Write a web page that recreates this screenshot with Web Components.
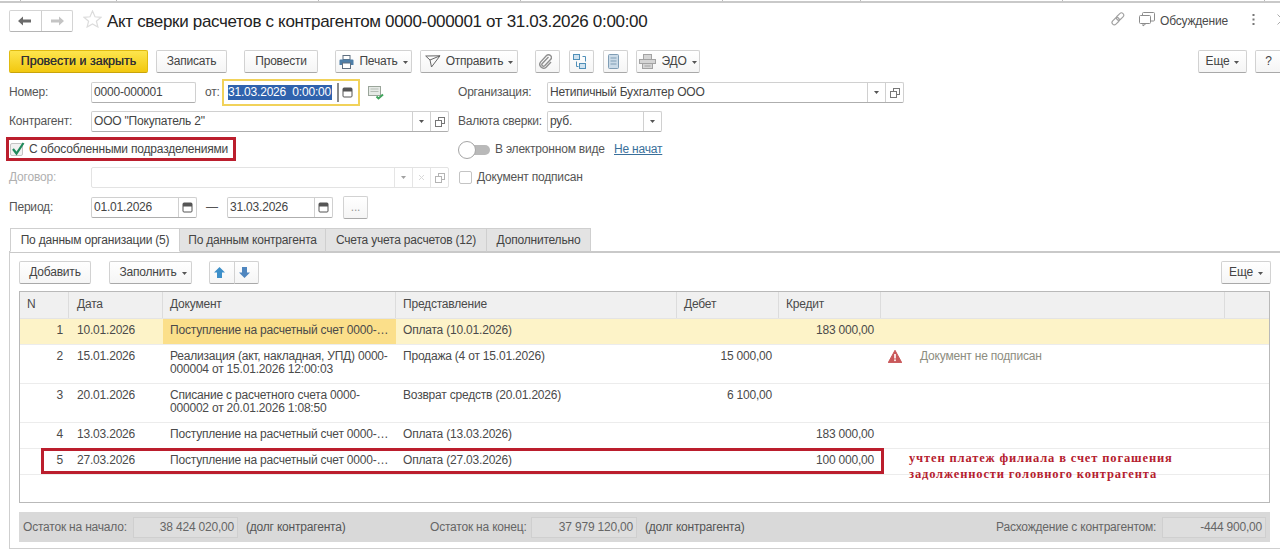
<!DOCTYPE html>
<html lang="ru">
<head>
<meta charset="utf-8">
<title>Акт сверки</title>
<style>
	html, body { margin: 0; height: 555px; overflow: hidden; background: #fff; }
	body { font: 12px/15px "Liberation Sans", Arial, sans-serif; letter-spacing: -.2px; color: #4a4a4a; }
</style>
</head>
<body>
<top-strip></top-strip>
<title-bar>Акт сверки расчетов с контрагентом 0000-000001 от 31.03.2026 0:00:00</title-bar>
<tool-bar>
	<ui-btn kind="primary" style="width:139px">Провести и закрыть</ui-btn>
	<ui-btn style="width:71px;margin-left:8px">Записать</ui-btn>
	<ui-btn style="width:74px;margin-left:17px">Провести</ui-btn>
	<ui-btn menu style="width:77px;margin-left:17px"><ui-icon name="printer" slot="icon"></ui-icon>Печать</ui-btn>
	<ui-btn menu style="width:98px;margin-left:8px"><ui-icon name="send" slot="icon"></ui-icon>Отправить</ui-btn>
	<ui-btn style="width:25px;margin-left:17px"><ui-icon name="clip" slot="icon"></ui-icon></ui-btn>
	<ui-btn style="width:25px;margin-left:9px"><ui-icon name="struct" slot="icon"></ui-icon></ui-btn>
	<ui-btn style="width:25px;margin-left:9px"><ui-icon name="list" slot="icon"></ui-icon></ui-btn>
	<ui-btn menu style="width:64px;margin-left:8px"><ui-icon name="edo" slot="icon"></ui-icon>ЭДО</ui-btn>
	<ui-btn menu style="width:49px;margin-left:auto">Еще</ui-btn>
	<ui-btn style="width:27px;margin:0 -11px 0 8px">?</ui-btn>
</tool-bar>
<doc-form>
	<form-row>
		<form-label style="width:82px">Номер:</form-label>
		<ui-field value="0000-000001" style="width:105px"></ui-field>
		<form-label style="width:17px;margin-left:9px">от:</form-label>
		<focus-date>31.03.2026&nbsp; 0:00:00</focus-date>
		<ui-icon name="docok" style="margin-left:8px"></ui-icon>
	</form-row>
	<form-row>
		<form-label style="width:89px">Организация:</form-label>
		<ui-field value="Нетипичный Бухгалтер ООО" buttons="caret,open" style="width:357px"></ui-field>
	</form-row>
	<form-row>
		<form-label style="width:82px">Контрагент:</form-label>
		<ui-field value="ООО &quot;Покупатель 2&quot;" buttons="caret,open" style="width:358px"></ui-field>
	</form-row>
	<form-row>
		<form-label style="width:89px">Валюта сверки:</form-label>
		<ui-field value="руб." buttons="caret" style="width:115px"></ui-field>
	</form-row>
	<form-row>
		<ui-check checked marked>С обособленными подразделениями</ui-check>
	</form-row>
	<form-row>
		<ui-toggle></ui-toggle>
		<form-label style="margin-left:5px;width:119px">В электронном виде</form-label>
		<ui-link>Не начат</ui-link>
	</form-row>
	<form-row>
		<form-label muted style="width:82px">Договор:</form-label>
		<ui-field disabled buttons="caret,clear,open" style="width:358px"></ui-field>
	</form-row>
	<form-row>
		<ui-check style="margin-left:1px">Документ подписан</ui-check>
	</form-row>
	<form-row>
		<form-label style="width:82px">Период:</form-label>
		<ui-field value="01.01.2026" buttons="cal" style="width:106px"></ui-field>
		<form-label style="width:30px;text-align:center">—</form-label>
		<ui-field value="31.03.2026" buttons="cal" style="width:106px"></ui-field>
		<ui-btn style="width:25px;margin-left:10px;color:#999">...</ui-btn>
	</form-row>
</doc-form>
<tab-bar>
	<tab-item active style="width:170px">По данным организации (5)</tab-item>
	<tab-item style="width:146px">По данным контрагента</tab-item>
	<tab-item style="width:161px">Счета учета расчетов (12)</tab-item>
	<tab-item style="width:104px">Дополнительно</tab-item>
</tab-bar>
<tab-panel>
	<tool-bar>
		<ui-btn style="width:72px">Добавить</ui-btn>
		<ui-btn menu style="width:83px;margin-left:18px;padding-left:5px">Заполнить</ui-btn>
		<ui-btn style="width:26px;margin-left:17px;border-radius:2px 0 0 2px"><ui-icon name="up" slot="icon"></ui-icon></ui-btn>
		<ui-btn style="width:25px;margin-left:-1px;border-radius:0 2px 2px 0"><ui-icon name="down" slot="icon"></ui-icon></ui-btn>
		<ui-btn menu style="width:50px;margin-left:auto;margin-right:-1px">Еще</ui-btn>
	</tool-bar>
	<recon-table>
		<recon-row head n="N" date="Дата" doc="Документ" view="Представление" debit="Дебет" credit="Кредит"></recon-row>
		<recon-row selected n="1" date="10.01.2026" doc="Поступление на расчетный счет 0000-…" view="Оплата (10.01.2026)" credit="183 000,00"></recon-row>
		<recon-row tall warn="Документ не подписан" n="2" date="15.01.2026" doc="Реализация (акт, накладная, УПД) 0000-000004 от 15.01.2026 12:00:03" view="Продажа (4 от 15.01.2026)" debit="15 000,00"></recon-row>
		<recon-row tall n="3" date="20.01.2026" doc="Списание с расчетного счета 0000-000002 от 20.01.2026 1:08:50" view="Возврат средств (20.01.2026)" debit="6 100,00"></recon-row>
		<recon-row n="4" date="13.03.2026" doc="Поступление на расчетный счет 0000-…" view="Оплата (13.03.2026)" credit="183 000,00"></recon-row>
		<recon-row marked n="5" date="27.03.2026" doc="Поступление на расчетный счет 0000-…" view="Оплата (27.03.2026)" credit="100 000,00">учтен платеж филиала в счет погашения<br>задолженности головного контрагента</recon-row>
	</recon-table>
	<totals-bar>
		<total-item label="Остаток на начало:" value="38 424 020,00" note="(долг контрагента)" style="width:407px;--lw:110px;--vw:105px"></total-item>
		<total-item label="Остаток на конец:" value="37 979 120,00" note="(долг контрагента)" style="width:566px;--lw:101px;--vw:106px"></total-item>
		<total-item label="Расхождение с контрагентом:" value="-444 900,00" style="--lw:166px;--vw:104px"></total-item>
	</totals-bar>
</tab-panel>
<script>
const ICONS = {
	back: `<svg width="14" height="10" viewBox="0 0 14 10"><path d="M0 5 5 0.5V3.5H13V6.5H5V9.5Z" fill="#6b6b6b"/></svg>`,
	forward: `<svg width="14" height="10" viewBox="0 0 14 10"><path d="M14 5 9 0.5V3.5H1V6.5H9V9.5Z" fill="#c4c4c4"/></svg>`,
	star: `<svg width="19" height="18" viewBox="0 0 19 18"><path d="M9.5 1 12 6.8 18 7.3 13.4 11.2 14.9 17 9.5 13.9 4.1 17 5.6 11.2 1 7.3 7 6.8Z" fill="none" stroke="#dcdcdc" stroke-width="1.2"/></svg>`,
	link: `<svg width="15" height="15" viewBox="0 0 15 15" fill="none" stroke="#a0a0a0" stroke-width="1.1"><rect x="-1.5" y="4.8" width="8.4" height="4.6" rx="2.3" transform="rotate(-45 2.7 7.1) translate(0.6 3.6)"/><rect x="6" y="1.8" width="8.4" height="4.6" rx="2.3" transform="rotate(-45 10.2 4.1) translate(-0.4 0.2)"/></svg>`,
	chat: `<svg width="17" height="15" viewBox="0 0 17 15" fill="none" stroke="#8c8c8c"><rect x="0.5" y="3.5" width="11" height="8" rx="1" fill="#fff"/><path d="M3.5 3V1.5a1 1 0 0 1 1-1h10a1 1 0 0 1 1 1V8a1 1 0 0 1-1 1H12"/><path d="M4 11.5V14L7 11.5"/></svg>`,
	dots: `<svg width="3" height="11" viewBox="0 0 3 11" fill="#777"><rect x="0.5" y="0" width="2" height="2"/><rect x="0.5" y="4.5" width="2" height="2"/><rect x="0.5" y="9" width="2" height="2"/></svg>`,
	chev: `<svg width="6" height="11" viewBox="0 0 6 11"><path d="M0.5 0.5 5.5 5.5 0.5 10.5" fill="none" stroke="#aaa"/></svg>`,
	printer: `<svg width="15" height="14" viewBox="0 0 15 14"><rect x="4" y="0.5" width="7" height="4" fill="#fff" stroke="#5f6f80"/><path d="M1.5 4.5h12a1 1 0 0 1 1 1V10h-14V5.5a1 1 0 0 1 1-1Z" fill="#4d7ea8"/><rect x="3.5" y="8" width="8" height="5.5" fill="#fff" stroke="#5f6f80"/></svg>`,
	send: `<svg width="16" height="13" viewBox="0 0 16 13" fill="none" stroke="#666"><path d="M0.7 1 15 0.8 6.5 12 5 5Z"/><path d="M5 5 15 0.8"/></svg>`,
	clip: `<svg width="13" height="15" viewBox="0 0 13 15" fill="none" stroke="#8f8f8f" stroke-width="1.4"><path d="M9.5 3 3.3 9.4a1.7 1.7 0 0 0 2.4 2.4L11.5 5.6a2.8 2.8 0 0 0-4-4L1.7 7.9a3.8 3.8 0 0 0 5.4 5.3L12 8"/></svg>`,
	struct: `<svg width="15" height="15" viewBox="0 0 15 15" fill="none" stroke="#4f8fb8"><rect x="1.5" y="0.5" width="6" height="5" fill="#cfe2ef"/><rect x="7.5" y="9.5" width="6" height="5" fill="#cfe2ef"/><path d="M10.5 2.5h3v5M4.5 7.5v5h2"/></svg>`,
	list: `<svg width="11" height="15" viewBox="0 0 11 15" fill="#cbdbe8" stroke="#7f9db5"><rect x="0.5" y="0.5" width="10" height="14" rx="1"/><path d="M2.5 4h6M2.5 7h6M2.5 10h6" fill="none"/></svg>`,
	edo: `<svg width="17" height="15" viewBox="0 0 17 15" fill="#d5d5d5" stroke="#a3a3a3"><rect x="4.5" y="0.5" width="8" height="5"/><rect x="0.5" y="5.5" width="16" height="4"/><rect x="3.5" y="9.5" width="10" height="5"/><path d="M5.5 12h6" fill="none"/></svg>`,
	caret: `<svg width="5" height="3" viewBox="0 0 5 3"><path d="M0 0H5L2.5 3Z" fill="#555"/></svg>`,
	open: `<svg width="10" height="10" viewBox="0 0 10 10" fill="#fff" stroke="#777"><rect x="3.5" y="0.5" width="6" height="6"/><rect x="0.5" y="3.5" width="6" height="6"/></svg>`,
	clear: `<svg width="7" height="7" viewBox="0 0 7 7" stroke="#bbb"><path d="M1 1 6 6M6 1 1 6"/></svg>`,
	cal: `<svg width="11" height="11" viewBox="0 0 11 11"><rect x="1" y="1" width="9" height="9" rx="1" fill="#fff" stroke="#555"/><rect x="1" y="1" width="9" height="3.5" fill="#555"/></svg>`,
	up: `<svg width="11" height="11" viewBox="0 0 11 11"><path d="M5.5 0 11 5.5H8V11H3V5.5H0Z" fill="#3d8fc9"/></svg>`,
	down: `<svg width="11" height="11" viewBox="0 0 11 11"><path d="M5.5 11 11 5.5H8V0H3V5.5H0Z" fill="#4f86bf"/></svg>`,
	warn: `<svg width="14" height="13" viewBox="0 0 14 13"><path d="M7 0.3 13.8 12.7H0.2Z" fill="#c9585a" stroke="#c9585a" stroke-linejoin="round"/><rect x="6.2" y="4" width="1.6" height="4.5" fill="#fff"/><rect x="6.2" y="9.4" width="1.6" height="1.7" fill="#fff"/></svg>`,
	docok: `<svg width="16" height="14" viewBox="0 0 16 14"><rect x="0.5" y="0.5" width="12" height="9" fill="#e6eae6" stroke="#9aa59a"/><path d="M2.5 3h8M2.5 5.5h8" stroke="#b5bdb5"/><path d="M8.5 10.5 10.5 12.5 15 8.5" fill="none" stroke="#3fa45b" stroke-width="2"/></svg>`
};

/** defines a simple element with its shadow markup */
function defineSimple(name, css, html){
	customElements.define(name, class extends HTMLElement {
		constructor(){
			super();
			this.attachShadow({mode:"open"}).innerHTML = `<style>${css}</style>${html}`;
		}
	});
}

customElements.define("ui-icon", class extends HTMLElement {
	constructor(){
		super();
		this.attachShadow({mode:"open"});
	}
	connectedCallback(){
		this.shadowRoot.innerHTML = `<style>:host{display:inline-flex;align-items:center;justify-content:center;flex:none}</style>${ICONS[this.getAttribute("name")]}`;
	}
});

defineSimple("top-strip", `
	:host { display:block; height:3px; box-sizing:border-box; position:relative; border-bottom:2px solid #c9c9c9; }
	i { position:absolute; top:-1px; width:1px; height:2px; background:#bbb; }
`, [20,116,318,520,722,860,1062,1264].map(x=>`<i style="left:${x}px"></i>`).join(""));

defineSimple("title-bar", `
	:host { display:flex; align-items:center; height:22px; padding:7px 0 18px 9px; }
	.nav { display:flex; width:64px; height:22px; box-sizing:border-box; border:1px solid #d4d4d4; border-bottom-color:#b5b5b5; border-radius:2px; }
	.nav span { flex:1; display:flex; align-items:center; justify-content:center; }
	.nav span + span { border-left:1px solid #cfcfcf; }
	.star { margin-left:10px; }
	.title { margin-left:5px; font-size:17px; letter-spacing:-.33px; color:#222; white-space:nowrap; flex:1; }
	.side { display:flex; align-items:center; }
`, `<div class="nav"><span>${ICONS.back}</span><span>${ICONS.forward}</span></div>
	<div class="star">${ICONS.star}</div>
	<div class="title"><slot></slot></div>
	<div class="side">
		<span style="margin-right:14px">${ICONS.link}</span>
		<span style="margin-right:4px">${ICONS.chat}</span>
		<span>Обсуждение</span>
		<span style="margin-left:24px">${ICONS.dots}</span>
		<span style="margin-left:22px;margin-right:-3px">${ICONS.chev}</span>
	</div>`);

defineSimple("tool-bar", `
	:host { display:flex; height:23px; padding:0 9px 0 9px; }
	:host-context(tab-panel) { padding:0; }
`, `<slot></slot>`);

customElements.define("ui-btn", class extends HTMLElement {
	constructor(){
		super();
		const caret = this.hasAttribute("menu") ? `<span class="caret">${ICONS.caret}</span>` : "";
		this.attachShadow({mode:"open"}).innerHTML = `<style>
			:host { display:inline-flex; flex:none; align-items:center; justify-content:center; box-sizing:border-box; height:23px; border:1px solid #d2d2d2; border-bottom-color:#a9a9a9; border-radius:2px; background:linear-gradient(#fff,#f5f5f5); color:#444; white-space:nowrap; }
			:host([kind=primary]) { background:linear-gradient(#fde54e,#f2c80f); border-color:#e0bb10; border-bottom-color:#c9a40a; color:#333; font-size:12.5px; letter-spacing:0; text-shadow:0 0 .5px #333; }
			::slotted([slot=icon]) { margin-right:5px; }
			.caret { display:inline-flex; margin-left:5px; margin-top:2px; }
		</style><slot name="icon"></slot><slot></slot>${caret}`;
	}
});

defineSimple("doc-form", `
	:host { display:grid; grid-template-columns:440px 1fr; column-gap:9px; grid-template-rows:29px 28px 28px 30px 21px; padding:9px 0 10px 9px; align-items:start; }
`, `<slot></slot>`);
defineSimple("form-row", `:host { display:flex; align-items:center; height:21px; white-space:nowrap; position:relative; }`, `<slot></slot>`);
defineSimple("form-label", `
	:host { display:block; flex:none; color:#555; }
	:host([muted]) { color:#b0b0b0; }
`, `<slot></slot>`);

customElements.define("ui-field", class extends HTMLElement {
	constructor(){
		super();
		const btns = (this.getAttribute("buttons") || "").split(",").filter(Boolean);
		const value = this.getAttribute("value") || "";
		this.attachShadow({mode:"open"}).innerHTML = `<style>
			:host { display:flex; flex:none; box-sizing:border-box; height:21px; border:1px solid #d0d0d0; border-bottom-color:#aeaeae; border-radius:2px; background:#fff; color:#444; }
			:host([disabled]) { border-color:#e3e3e3; }
			:host([disabled]) .b { opacity:.55; }
			.v { flex:1; padding-left:2px; line-height:19px; overflow:hidden; white-space:nowrap; }
			.b { flex:none; width:17px; display:flex; align-items:center; justify-content:center; border-left:1px solid #d0d0d0; }
		</style><div class="v">${value.replace(/"/g,"&quot;")}</div>${btns.map(b=>`<div class="b">${ICONS[b]}</div>`).join("")}`;
	}
});

defineSimple("focus-date", `
	:host { display:flex; flex:none; align-items:center; box-sizing:border-box; width:138px; height:27px; margin:-3px 0; border:2px solid #f1d25a; background:#fff; }
	.sel { margin-left:4px; width:104px; height:15px; line-height:15px; background:#2f62ad; color:#fff; white-space:nowrap; overflow:hidden; }
	.bar { width:2px; height:19px; margin-left:5px; background:#8a8a8a; }
	.c { margin-left:3px; display:flex; }
`, `<span class="sel"><slot></slot></span><span class="bar"></span><span class="c">${ICONS.cal}</span>`);

defineSimple("ui-check", `
	:host { display:flex; align-items:center; position:relative; color:#555; white-space:nowrap; }
	.box { width:13px; height:13px; box-sizing:border-box; border:1px solid #c4c4c4; border-radius:2px; background:#fff; margin-right:5px; position:relative; flex:none; }
	:host([marked]) { margin-left:1px; color:#444; }
	:host([marked]) .box { margin-right:6px; background:#f1f1f1; }
	svg { display:none; position:absolute; left:0; top:-3px; }
	:host([checked]) svg { display:block; }
	.mark { display:none; position:absolute; left:-4px; top:-5px; width:230px; height:24px; box-sizing:border-box; border:3px solid #bb1e2d; }
	:host([marked]) .mark { display:block; }
`, `<span class="box"><svg width="14" height="15" viewBox="0 0 14 15"><path d="M2 8 5.5 12.5 12.5 2" fill="none" stroke="#1f8a5c" stroke-width="2.2"/></svg></span><slot></slot><span class="mark"></span>`);

defineSimple("ui-toggle", `
	:host { display:block; flex:none; width:32px; height:18px; position:relative; }
	.p { position:absolute; left:8px; right:0; top:4px; height:10px; border-radius:5px; background:#b9b9b9; }
	.k { position:absolute; left:0; top:0; width:18px; height:18px; box-sizing:border-box; border-radius:50%; border:1px solid #a5a5a5; background:#fff; }
`, `<span class="p"></span><span class="k"></span>`);
defineSimple("ui-link", `:host { display:block; color:#3a6f9a; text-decoration:underline; }`, `<slot></slot>`);

defineSimple("tab-bar", `:host { display:flex; height:24px; padding-left:10px; position:relative; z-index:1; }`, `<slot></slot>`);
defineSimple("tab-item", `
	:host { display:block; flex:none; box-sizing:border-box; height:24px; line-height:22px; text-align:center; background:#e3e3e3; border:1px solid #cfcfcf; border-left:0; border-bottom:1px solid #c9c9c9; color:#444; white-space:nowrap; }
	:host([active]) { background:#fff; border-left:1px solid #cfcfcf; border-bottom-color:#fff; }
`, `<slot></slot>`);

defineSimple("tab-panel", `
	:host { display:block; box-sizing:border-box; height:298px; margin:-1px 0 0 9px; padding:8px 10px 0 9px; border:1px solid #cfcfcf; border-top:2px solid #c9c9c9; border-right:0; }
`, `<slot></slot>`);

const COLUMNS = "49px 94px 233px 281px 102px 102px 344px 1fr";
defineSimple("recon-table", `
	:host { display:block; box-sizing:border-box; height:212px; margin-top:7px; border:1px solid #b9b9b9; }
`, `<slot></slot>`);

customElements.define("recon-row", class extends HTMLElement {
	constructor(){
		super();
		const a = n => this.getAttribute(n) || "";
		const warn = a("warn") ? `<span class="w">${ICONS.warn}</span><span class="wt">${a("warn")}</span>` : "";
		this.attachShadow({mode:"open"}).innerHTML = `<style>
			:host { display:grid; grid-template-columns:${COLUMNS}; box-sizing:border-box; height:26px; border-bottom:1px solid #ececec; position:relative; line-height:13px; }
			:host([tall]) { height:39px; }
			:host([head]) { height:27px; background:#f0f0f0; border-bottom:1px solid #e4e4e4; }
			:host([selected]) { background:#fdf3c8; }
			.c { padding:5px 7px 0; overflow:hidden; }
			.n { text-align:right; padding-right:6px; padding-left:0; }
			.d { padding-left:8px; padding-right:0; }
			.r { text-align:right; }
			.x { position:relative; padding:0; overflow:visible; }
			:host([head]) .c { padding-top:6px; border-right:1px solid #dcdcdc; text-align:left; }
			:host([head]) .n { padding-left:7px; }
			:host([head]) .x { border-right:1px solid #dcdcdc; }
			:host([head]) .x.last { border:0; }
			:host([selected]) .doc { background:#fbdf8a; }
			.w { position:absolute; left:7px; top:5px; }
			.wt { position:absolute; left:39px; top:5px; color:#8d8d80; white-space:nowrap; }
			.mark { display:none; position:absolute; left:21px; top:-1px; width:843px; height:26px; box-sizing:border-box; border:3px solid #bb1e2d; }
			:host([marked]) .mark { display:block; }
			.note { position:absolute; left:28px; top:1px; width:330px; font:bold 12.5px/16px "Liberation Serif", "Times New Roman", serif; letter-spacing:.86px; color:#b5202e; white-space:nowrap; }
		</style>
		<div class="c n">${a("n")}</div><div class="c d">${a("date")}</div><div class="c doc">${a("doc")}</div><div class="c">${a("view")}</div>
		<div class="c r">${a("debit")}</div><div class="c r">${a("credit")}</div>
		<div class="c x">${warn}<div class="note"><slot></slot></div></div><div class="c x last"></div><span class="mark"></span>`;
	}
});

defineSimple("totals-bar", `
	:host { display:flex; align-items:center; box-sizing:border-box; width:1251px; height:30px; margin-top:9px; padding-left:4px; background:#d9d9d9; white-space:nowrap; }
`, `<slot></slot>`);

customElements.define("total-item", class extends HTMLElement {
	constructor(){
		super();
		const note = this.getAttribute("note");
		this.attachShadow({mode:"open"}).innerHTML = `<style>
			:host { display:flex; flex:none; align-items:center; color:#666; }
			.l { width:var(--lw); flex:none; }
			.v { width:var(--vw); flex:none; box-sizing:border-box; height:21px; line-height:19px; padding-right:3px; text-align:right; background:#dedede; border:1px solid #cfcfcf; }
			.t { margin-left:8px; color:#555; }
		</style><span class="l">${this.getAttribute("label")}</span><span class="v">${this.getAttribute("value")}</span>${note ? `<span class="t">${note}</span>` : ""}`;
	}
});
</script>
</body>
</html>
